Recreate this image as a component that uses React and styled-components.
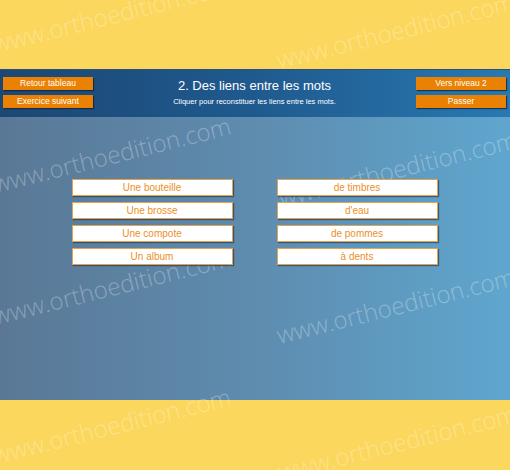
import React from 'react';
import styled, { createGlobalStyle } from 'styled-components';

const GlobalStyle = createGlobalStyle`
    html, body {
        margin: 0;
        padding: 0;
        background: #FCD75D;
    }
    * {
        box-sizing: border-box;
    }
`

const Page = styled.div`
    position: relative;
    width: 510px;
    height: 470px;
    overflow: hidden;
    display: flex;
    flex-direction: column;
    background: #FCD75D;
    font-family: "Liberation Sans", Arial, sans-serif;
`

const YellowBand = styled.div`
    height: ${p => p.$h}px;
    flex-shrink: 0;
`

const Header = styled.div`
    position: relative;
    z-index: 2;
    height: 48px;
    flex-shrink: 0;
    display: flex;
    align-items: flex-start;
    justify-content: space-between;
    padding: 7px 4px 0 3px;
    background: linear-gradient(90deg, #1c4775 0%, #1f5a8e 50%, #2879b2 100%);
    border-top: 1px solid #2a4f78;
`

const ButtonStack = styled.div`
    display: flex;
    flex-direction: column;
    gap: 5px;
`

const OrangeButton = styled.button`
    width: 90px;
    height: 13px;
    padding: 0;
    border: 0;
    border-radius: 0;
    background: #EA8103;
    color: #FFFFFF;
    font-family: "Liberation Sans", Arial, sans-serif;
    font-size: 8.5px;
    line-height: 13px;
    text-align: center;
    box-shadow: 1px 1px 1px rgba(10, 30, 60, 0.7);
    cursor: pointer;
`

const TitleBlock = styled.div`
    flex: 1;
    display: flex;
    flex-direction: column;
    align-items: center;
    color: #FFFFFF;
`

const Title = styled.div`
    font-size: 13px;
    line-height: 15px;
    margin-top: 1px;
`

const Subtitle = styled.div`
    font-size: 7.5px;
    line-height: 10px;
    margin-top: 4px;
`

const Body = styled.div`
    position: relative;
    height: 283px;
    flex-shrink: 0;
    display: flex;
    justify-content: center;
    padding-top: 62px;
    background: linear-gradient(90deg, #5a7896 0%, #5e8caf 50%, #5fa6ce 100%);
`

const Columns = styled.div`
    position: relative;
    z-index: 2;
    display: grid;
    grid-template-columns: 161px 161px;
    column-gap: 44px;
    align-content: start;
    margin-left: -1px;
`

const Column = styled.div`
    display: flex;
    flex-direction: column;
    gap: 6px;
`

const WordCard = styled.div`
    height: 17px;
    background: #FFFFFF;
    border: 1px solid #E3A24E;
    box-shadow: 1px 1px 1px rgba(30, 40, 60, 0.55);
    color: #EB9028;
    font-size: 10px;
    line-height: 15px;
    text-align: center;
    cursor: pointer;
`

const WatermarkLayer = styled.div`
    position: absolute;
    inset: 0;
    z-index: 1;
    pointer-events: none;
`

const Watermark = styled.span`
    position: absolute;
    left: ${p => p.$x}px;
    top: ${p => p.$y}px;
    transform-origin: 0 100%;
    transform: translateY(-100%) rotate(-14deg);
    font-family: "Open Sans", "DejaVu Sans", sans-serif;
    font-weight: 300;
    font-size: 24px;
    line-height: 24px;
    white-space: nowrap;
    color: rgba(255, 255, 255, 0.3);
`

const leftWords = ['Une bouteille', 'Une brosse', 'Une compote', 'Un album']
const rightWords = ['de timbres', "d'eau", 'de pommes', 'à dents']

const marks = [
    [-4, 56], [280, 72],
    [-4, 196], [282, 210],
    [-4, 328], [280, 347],
    [-4, 467], [282, 484],
]

export default function App() {
    return (
        <>
            <GlobalStyle />
            <Page>
                <YellowBand $h={69} />
                <Header>
                    <ButtonStack>
                        <OrangeButton>Retour tableau</OrangeButton>
                        <OrangeButton>Exercice suivant</OrangeButton>
                    </ButtonStack>
                    <TitleBlock>
                        <Title>2. Des liens entre les mots</Title>
                        <Subtitle>Cliquer pour reconstituer les liens entre les mots.</Subtitle>
                    </TitleBlock>
                    <ButtonStack>
                        <OrangeButton>Vers niveau 2</OrangeButton>
                        <OrangeButton>Passer</OrangeButton>
                    </ButtonStack>
                </Header>
                <Body>
                    <Columns>
                        <Column>
                            {leftWords.map(w => <WordCard key={w}>{w}</WordCard>)}
                        </Column>
                        <Column>
                            {rightWords.map(w => <WordCard key={w}>{w}</WordCard>)}
                        </Column>
                    </Columns>
                </Body>
                <YellowBand $h={70} />
                <WatermarkLayer>
                    {marks.map(([x, y], i) => (
                        <Watermark key={i} $x={x} $y={y}>www.orthoedition.com</Watermark>
                    ))}
                </WatermarkLayer>
            </Page>
        </>
    )
}
